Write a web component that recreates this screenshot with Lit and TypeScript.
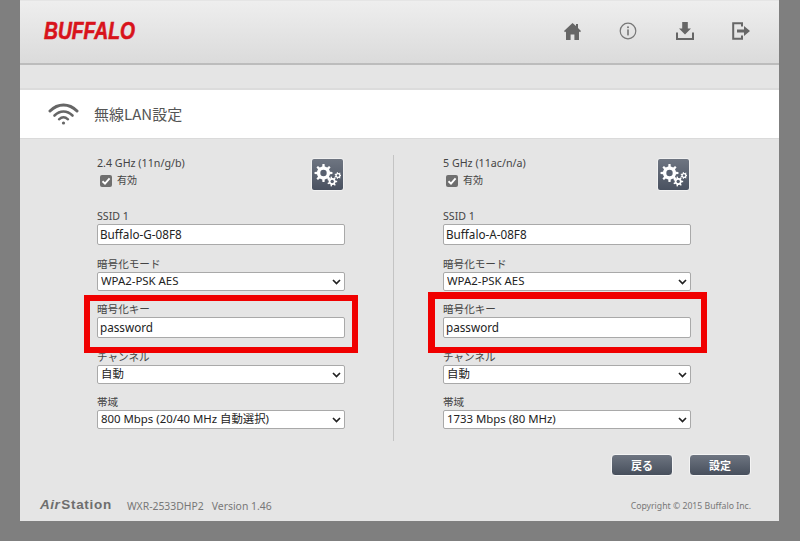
import { LitElement, html, css, svg } from "lit";
import { customElement } from "lit/decorators.js";

function gearPath(cx: number, cy: number, ro: number, ri: number, teeth: number): string {
  const pts: string[] = [];
  const step = (Math.PI * 2) / teeth;
  for (let i = 0; i < teeth; i++) {
    const a = i * step;
    const seq: [number, number][] = [
      [ri, a - step * 0.5],
      [ri, a - step * 0.24],
      [ro, a - step * 0.15],
      [ro, a + step * 0.15],
      [ri, a + step * 0.24],
    ];
    for (const [r, t] of seq) pts.push(`${(cx + r * Math.cos(t)).toFixed(2)} ${(cy + r * Math.sin(t)).toFixed(2)}`);
  }
  return "M" + pts.join("L") + "Z";
}

const gearIcon = html`<svg width="27" height="24" viewBox="0 0 27 24">
  ${svg`<path fill="#fff" d="${gearPath(9.5, 10, 9, 6.6, 8)}"/>
  <circle cx="9.5" cy="10" r="3.2" fill="#596170"/>
  <path fill="#fff" d="${gearPath(18.2, 18.5, 5, 3.5, 7)}"/>
  <circle cx="18.2" cy="18.5" r="1.7" fill="#596170"/>
  <path fill="#fff" d="${gearPath(24, 12.5, 3.6, 2.6, 7)}"/>
  <circle cx="24" cy="12.5" r="1.2" fill="#596170"/>`}
</svg>`;

interface Band {
  title: string;
  ssid: string;
  width: string;
}

const bands: Band[] = [
  { title: "2.4 GHz (11n/g/b)", ssid: "Buffalo-G-08F8", width: "800 Mbps (20/40 MHz 自動選択)" },
  { title: "5 GHz (11ac/n/a)", ssid: "Buffalo-A-08F8", width: "1733 Mbps (80 MHz)" },
];

@customElement("app-root")
export class AppRoot extends LitElement {
  static styles = css`
    :host {
      display: block;
      width: 800px;
      height: 541px;
      box-sizing: border-box;
      padding: 0 21px 20px 20px;
      background: #7f7f7f;
      font-family: "Noto Sans", "Noto Sans CJK JP", sans-serif;
      color: #444;
      overflow: hidden;
    }
    .page {
      position: relative;
      height: 521px;
      background: #e5e5e5;
      display: flex;
      flex-direction: column;
    }
    .header {
      height: 62px;
      margin-top: 1px;
      border-bottom: 2px solid #bcbcbc;
      background: linear-gradient(#eeeeee, #dbdbdb);
      display: flex;
      align-items: center;
      padding: 0 29px 0 24px;
    }
    .logo {
      font-family: "Liberation Sans", sans-serif;
      font-weight: 700;
      font-style: italic;
      font-size: 23.5px;
      line-height: 24px;
      color: #d8131b;
      -webkit-text-stroke: 0.6px #d8131b;
      transform: scaleX(0.82);
      transform-origin: left center;
      margin-top: -3px;
    }
    .icons {
      margin-left: auto;
      display: flex;
      gap: 37px;
      align-items: center;
      margin-top: -2px;
    }
    .icons svg { display: block; }
    .band {
      height: 23px;
      border-bottom: 2px solid #dcdcdc;
    }
    .title {
      height: 48px;
      background: #fff;
      border-bottom: 1px solid #dadada;
      display: flex;
      align-items: center;
      padding-left: 28px;
      gap: 15px;
      font-size: 15px;
      color: #555;
      font-family: "Noto Sans CJK JP", sans-serif;
      font-weight: 400;
    }
    .title svg { display: block; }
    .title span { margin-top: -1px; }
    .form {
      display: flex;
      padding: 16px 0 0 77px;
      height: 286px;
    }
    .col { width: 248px; }
    .divider {
      width: 1px;
      background: #c4c4c4;
      margin: 0 49px 0 48px;
    }
    .head {
      display: flex;
      justify-content: space-between;
      height: 54px;
    }
    .band-name { font-size: 10.7px; line-height: 15px; color: #444; padding-top: 1px; }
    .enabled {
      display: flex;
      align-items: center;
      gap: 5px;
      margin: 3px 0 0 3px;
      font-size: 10px;
      line-height: 13px;
      color: #444;
    }
    .check {
      width: 12px;
      height: 12px;
      border-radius: 2px;
      background: #6f6f6f;
      display: flex;
      align-items: center;
      justify-content: center;
    }
    .gear {
      width: 33px;
      height: 33px;
      box-sizing: border-box;
      margin-top: 3px;
      margin-right: 1px;
      border-radius: 3px;
      border: 1px solid #f1f1f1;
      background: linear-gradient(#6e7581, #495160);
      display: flex;
      align-items: center;
      justify-content: center;
      padding: 0;
    }
    .label {
      font-size: 10.6px;
      line-height: 14px;
      height: 15px;
      color: #444;
      white-space: nowrap;
    }
    .control {
      display: block;
      width: 100%;
      box-sizing: border-box;
      margin: 0;
      border: 1px solid #a9a9a9;
      border-radius: 2px;
      background: #fff;
      color: #222;
      font-family: "Noto Sans", "Noto Sans CJK JP", sans-serif;
      outline: none;
    }
    input.control {
      height: 21px;
      padding: 0 2px 1px;
      margin-bottom: 12px;
      font-size: 11.7px;
    }
    select.control {
      height: 19px;
      padding: 0 14px 2px 3px;
      margin-bottom: 11px;
      font-size: 11.4px;
      appearance: none;
      background: #fff
        url("data:image/svg+xml;utf8,<svg xmlns='http://www.w3.org/2000/svg' width='9' height='6' viewBox='0 0 9 6'><path d='M1 1l3.5 3.5L8 1' fill='none' stroke='%23222' stroke-width='1.7'/></svg>")
        no-repeat right 3px center;
    }
    .actions {
      display: flex;
      justify-content: flex-end;
      gap: 16px;
      padding: 13px 28px 0 0;
    }
    .btn {
      width: 62px;
      height: 22px;
      box-sizing: border-box;
      border: 1px solid #f4f4f4;
      border-radius: 4px;
      background: linear-gradient(#6e7581, #474f5c);
      color: #fff;
      font-family: "Noto Sans CJK JP", sans-serif;
      font-size: 11px;
      font-weight: 700;
      padding: 0;
    }
    .footer {
      margin-top: auto;
      height: 22px;
      display: flex;
      align-items: flex-start;
      padding: 0 28px 0 20px;
      font-size: 10.4px;
      line-height: 14px;
      color: #777;
    }
    .air {
      font-family: "Liberation Sans", sans-serif;
      font-weight: 700;
      font-size: 13.5px;
      line-height: 14px;
      letter-spacing: 0.7px;
      color: #6e6e6e;
      margin: -1px 15px 0 0;
    }
    .air i { letter-spacing: 0.5px; margin-right: 1px; }
    .model span { margin-left: 8px; }
    .copy { margin-left: auto; font-size: 8.7px; }
    .mark {
      position: absolute;
      box-sizing: border-box;
      border-style: solid;
      border-color: #f00000;
      pointer-events: none;
    }
    .mark.a { left: 64px; top: 295px; width: 274px; height: 58px; border-width: 6px; }
    .mark.b { left: 408px; top: 292px; width: 279px; height: 61px; border-width: 7px 6px 6px 7px; }
  `;

  private column(b: Band) {
    return html`<div class="col">
      <div class="head">
        <div>
          <div class="band-name">${b.title}</div>
          <div class="enabled">
            <span class="check">
              <svg width="10" height="10" viewBox="0 0 10 10"><path d="M1.5 5.2 4 7.6 8.6 2.4" fill="none" stroke="#fff" stroke-width="1.9"/></svg>
            </span>
            有効
          </div>
        </div>
        <button class="gear" aria-label="詳細設定">${gearIcon}</button>
      </div>
      <div class="label">SSID 1</div>
      <input class="control" .value=${b.ssid} />
      <div class="label">暗号化モード</div>
      <select class="control"><option>WPA2-PSK AES</option></select>
      <div class="label">暗号化キー</div>
      <input class="control" .value=${"password"} />
      <div class="label">チャンネル</div>
      <select class="control"><option>自動</option></select>
      <div class="label">帯域</div>
      <select class="control"><option>${b.width}</option></select>
    </div>`;
  }

  render() {
    return html`<div class="page">
      <header class="header">
        <div class="logo">BUFFALO</div>
        <div class="icons">
          <svg width="17" height="18" viewBox="0 0 17 18"><path fill="#666" d="M8.5 1 12 4V2h2v4l3 3-1 1.2L15 9.4V18h-4.6v-5.5H6.6V18H2V9.4l-1 .8L0 9z"/></svg>
          <svg width="18" height="18" viewBox="0 0 18 18" style="margin:0 3px 0 1px"><circle cx="9" cy="9" r="7.8" fill="none" stroke="#777" stroke-width="1.2"/><circle cx="9" cy="5.2" r="1" fill="#777"/><rect x="8.2" y="7.4" width="1.6" height="6" fill="#777"/></svg>
          <svg width="18" height="18" viewBox="0 0 18 18" style="margin-left:-1px"><path fill="#666" d="M6.2 0h5.6v6.5H15L9 12.5 3 6.5h3.2z"/><path fill="none" stroke="#666" stroke-width="2" d="M1 10.5V17h16v-6.5"/></svg>
          <svg width="18" height="18" viewBox="0 0 18 18" style="margin-left:1px"><path fill="none" stroke="#666" stroke-width="2" d="M10 4.5V1.2H1.2v15.6H10v-3.3"/><path fill="#666" d="M5 7.5h7V4l6 5-6 5v-3.5H5z"/></svg>
        </div>
      </header>
      <div class="band"></div>
      <div class="title">
        <svg width="31" height="22" viewBox="0 0 31 22" fill="none" stroke="#666" stroke-linecap="round">
          <path stroke-width="3" d="M2 8C10 0 21 0 29 8"/>
          <path stroke-width="2.6" d="M6.5 12.5C12 7.2 19 7.2 24.5 12.5"/>
          <path stroke-width="2.4" d="M11 16.3c3-2.7 6-2.7 9 0"/>
          <circle cx="15.5" cy="20" r="1.6" fill="#666" stroke="none"/>
        </svg>
        <span>無線LAN設定</span>
      </div>
      <div class="form">
        ${this.column(bands[0])}
        <div class="divider"></div>
        ${this.column(bands[1])}
      </div>
      <div class="actions">
        <button class="btn">戻る</button>
        <button class="btn">設定</button>
      </div>
      <footer class="footer">
        <div class="air"><i>Air</i>Station</div>
        <div class="model">WXR-2533DHP2<span>Version 1.46</span></div>
        <div class="copy">Copyright © 2015 Buffalo Inc.</div>
      </footer>
      <div class="mark a"></div>
      <div class="mark b"></div>
    </div>`;
  }
}
